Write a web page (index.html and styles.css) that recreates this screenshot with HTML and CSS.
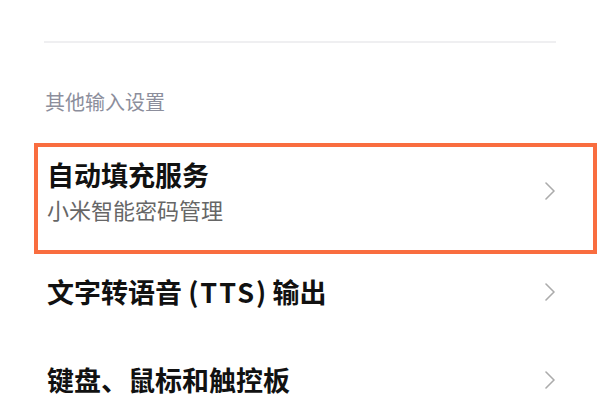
FILE: index.html
```html
<!DOCTYPE html>
<html lang="zh-CN">
<head>
<meta charset="utf-8">
<title>其他输入设置</title>
<link rel="stylesheet" href="styles.css">
</head>
<body>
  <div class="page">
    <div class="divider"></div>
    <div class="section-title">其他输入设置</div>
    <ul class="list">
      <li class="row row-focus">
        <div class="row-text">
          <div class="row-title">自动填充服务</div>
          <div class="row-sub">小米智能密码管理</div>
        </div>
        <svg class="chevron" viewBox="0 0 10 18" width="10" height="18"><path d="M1 1 L9 9 L1 17" /></svg>
      </li>
      <li class="row">
        <div class="row-text">
          <div class="row-title">文字转语音 (<span class="latin">TTS</span>) 输出</div>
        </div>
        <svg class="chevron" viewBox="0 0 10 18" width="10" height="18"><path d="M1 1 L9 9 L1 17" /></svg>
      </li>
      <li class="row">
        <div class="row-text">
          <div class="row-title">键盘、鼠标和触控板</div>
        </div>
        <svg class="chevron" viewBox="0 0 10 18" width="10" height="18"><path d="M1 1 L9 9 L1 17" /></svg>
      </li>
    </ul>
  </div>
</body>
</html>
```
FILE: styles.css
```css
html, body {
  margin: 0;
  padding: 0;
  background: #ffffff;
}

body {
  font-family: "Noto Sans CJK SC", "Noto Sans", sans-serif;
  overflow: hidden;
}

.page {
  width: 600px;
  height: 400px;
  padding-top: 41px;
  box-sizing: border-box;
  overflow: hidden;
}

.divider {
  height: 2px;
  margin: 0 44px 0 44px;
  background: #efeff1;
}

.section-title {
  margin: 45px 0 0 45px;
  font-size: 20px;
  line-height: 28px;
  color: #8c8e9c;
}

.list {
  list-style: none;
  margin: 27px 3px 0 34px;
  padding: 0;
}

.row {
  display: flex;
  align-items: center;
  border: 4px solid transparent;
  border-top: 0;
  border-bottom: 0;
  padding: 21px 38px 33px 9px;
}

.row-focus {
  border: 4px solid #f96d3f;
  padding: 11px 38px 26px 9px;
}

.row-text {
  flex: 1;
}

.row-title {
  font-size: 27px;
  line-height: 34px;
  font-weight: 700;
  color: #111111;
}

.latin {
  letter-spacing: 2px;
  margin-left: 2px;
}

.row-sub {
  margin-top: 2px;
  font-size: 22px;
  line-height: 30px;
  color: #666666;
}

.chevron {
  flex: none;
  fill: none;
  stroke: #ababab;
  stroke-width: 1.6;
  stroke-linecap: round;
  stroke-linejoin: round;
}
```
